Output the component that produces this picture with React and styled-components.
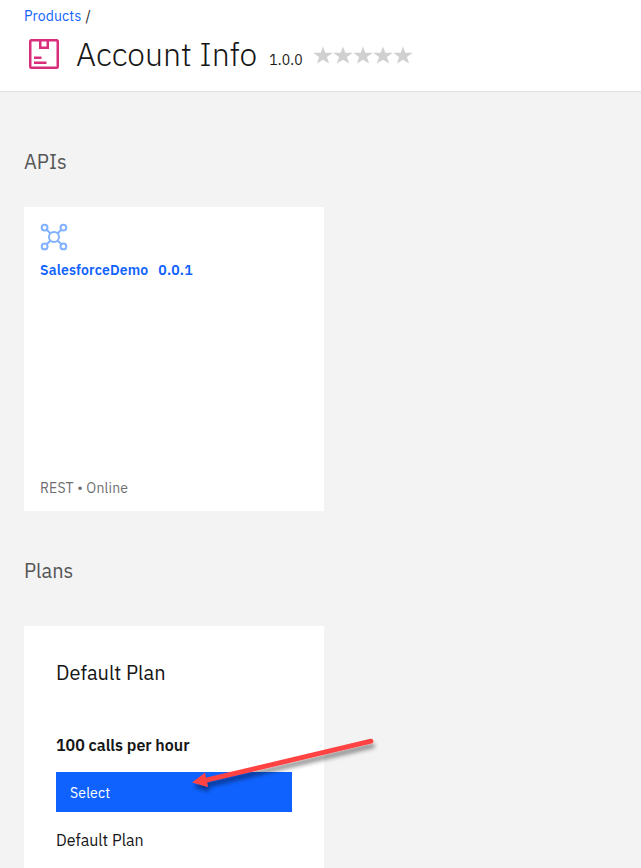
import React from 'react';
import styled, { createGlobalStyle } from 'styled-components';

const GlobalStyle = createGlobalStyle`
  *, *::before, *::after { box-sizing: border-box; }
  html, body { margin: 0; background: #f3f3f3; }
  body {
    height: 868px;
    overflow: hidden;
    font-family: "IBM Plex Sans", Roboto, sans-serif;
    font-size: 14px;
    color: #161616;
  }
`;

const Page = styled.div`
  position: relative;
  height: 868px;
  overflow: hidden;
`;

const Header = styled.header`
  height: 92px;
  padding: 7px 24px 0;
  background: #fff;
  border-bottom: 1px solid #e0e0e0;
`;

const Breadcrumb = styled.nav`
  display: flex;
  gap: 4px;
  height: 18px;
  line-height: 18px;
`;

const Link = styled.a`
  color: #0f62fe;
  text-decoration: none;
  letter-spacing: 0.16px;
`;

const TitleRow = styled.div`
  display: flex;
  align-items: flex-start;
  margin-top: 9px;
`;

const Title = styled.h1`
  margin: 0 0 0 12px;
  font-size: 32px;
  font-weight: 300;
  line-height: 40px;
  white-space: nowrap;
`;

const Version = styled.span`
  margin: 16px 0 0 12px;
  line-height: 20px;
  letter-spacing: 0.16px;
`;

const Stars = styled.div`
  display: flex;
  margin: 11px 0 0 10.5px;
`;

const Section = styled.section`
  padding: 0 24px;
`;

const SectionTitle = styled.h2`
  margin: 0;
  padding-top: ${({ $top }) => $top}px;
  font-size: 20px;
  font-weight: 400;
  line-height: 26px;
  color: #565656;
`;

const ApiCard = styled.article`
  display: flex;
  flex-direction: column;
  align-items: flex-start;
  width: 300px;
  height: 304px;
  margin-top: 32px;
  padding: 16px 16px 13px;
  background: #fff;
`;

const ApiName = styled.a`
  display: flex;
  gap: 10px;
  margin-top: 9px;
  color: #0f62fe;
  font-weight: 600;
  line-height: 20px;
  letter-spacing: 0.16px;
`;

const ApiMeta = styled.div`
  margin-top: auto;
  line-height: 20px;
  color: #6f6f6f;
  letter-spacing: 0.16px;
`;

const PlanCard = styled.article`
  width: 300px;
  height: 260px;
  margin-top: 42px;
  padding: 34px 32px 0;
  background: #fff;
`;

const PlanTitle = styled.h3`
  margin: 0;
  font-size: 20px;
  font-weight: 400;
  line-height: 26px;
`;

const PlanRate = styled.div`
  margin-top: 48px;
  font-size: 16px;
  font-weight: 600;
  line-height: 22px;
`;

const SelectButton = styled.button`
  display: block;
  width: 236px;
  height: 40px;
  margin-top: 16px;
  padding: 2px 14px 0;
  border: 0;
  background: #0f62fe;
  color: #fff;
  font: inherit;
  letter-spacing: 0.16px;
  text-align: left;
`;

const PlanDescription = styled.p`
  margin: 16px 0 0;
  font-size: 16px;
  line-height: 24px;
`;

const Pointer = styled.svg`
  position: absolute;
  left: 185px;
  top: 732px;
  pointer-events: none;
`;

const ProductIcon = () => (
  <svg width="40" height="40" viewBox="0 0 32 32" fill="#da2c7c">
    <path d="M8 18h6v2H8zM8 22h10v2H8z" />
    <path d="M26 4H6a2 2 0 0 0-2 2v20a2 2 0 0 0 2 2h20a2 2 0 0 0 2-2V6a2 2 0 0 0-2-2ZM18 6v4h-4V6ZM6 26V6h6v6h8V6h6v20Z" />
  </svg>
);

const ApiIcon = () => (
  <svg width="28" height="28" viewBox="0 0 28 28" fill="none" stroke="#82b1ff" strokeWidth="2">
    <circle cx="14" cy="14" r="5" />
    <circle cx="4.6" cy="4.6" r="2.9" />
    <circle cx="23.4" cy="4.6" r="2.9" />
    <circle cx="4.6" cy="23.4" r="2.9" />
    <circle cx="23.4" cy="23.4" r="2.9" />
    <path d="M6.7 6.7l3.8 3.8M21.3 6.7l-3.8 3.8M6.7 21.3l3.8-3.8M21.3 21.3l-3.8-3.8" />
  </svg>
);

const Star = () => (
  <svg width="20" height="20" viewBox="0 0 20 20" fill="#d0d0d0">
    <path d="M10 1.500l2.300 6.200 7.600.1-6 4.300 2.200 6.400L10 14.700l-6.100 3.800 2.200-6.400L.1 7.800l7.600-.1z" />
  </svg>
);

const Arrow = () => (
  <Pointer width="200" height="70" viewBox="0 0 200 70">
    <defs>
      <filter id="shadow" x="-10%" y="-20%" width="120%" height="160%">
        <feDropShadow dx="1.500" dy="4.500" stdDeviation="2" floodColor="#000" floodOpacity="0.45" />
      </filter>
    </defs>
    <g filter="url(#shadow)" fill="#ff4242">
      <path d="M186 9.200L21 48.200" stroke="#ff4242" strokeWidth="4.800" strokeLinecap="round" />
      <path d="M7 50.600L20 40.700L23 55z" />
    </g>
  </Pointer>
);

export default function App() {
  return (
    <Page>
      <GlobalStyle />
      <Header>
        <Breadcrumb>
          <Link>Products</Link>
          <span>/</span>
        </Breadcrumb>
        <TitleRow>
          <ProductIcon />
          <Title>Account Info</Title>
          <Version>1.0.0</Version>
          <Stars>
            {[1, 2, 3, 4, 5].map((n) => <Star key={n} />)}
          </Stars>
        </TitleRow>
      </Header>
      <Section>
        <SectionTitle $top={57}>APIs</SectionTitle>
        <ApiCard>
          <ApiIcon />
          <ApiName>
            <span>SalesforceDemo</span>
            <span>0.0.1</span>
          </ApiName>
          <ApiMeta>REST • Online</ApiMeta>
        </ApiCard>
      </Section>
      <Section>
        <SectionTitle $top={47}>Plans</SectionTitle>
        <PlanCard>
          <PlanTitle>Default Plan</PlanTitle>
          <PlanRate>100 calls per hour</PlanRate>
          <SelectButton>Select</SelectButton>
          <PlanDescription>Default Plan</PlanDescription>
        </PlanCard>
      </Section>
      <Arrow />
    </Page>
  );
}
